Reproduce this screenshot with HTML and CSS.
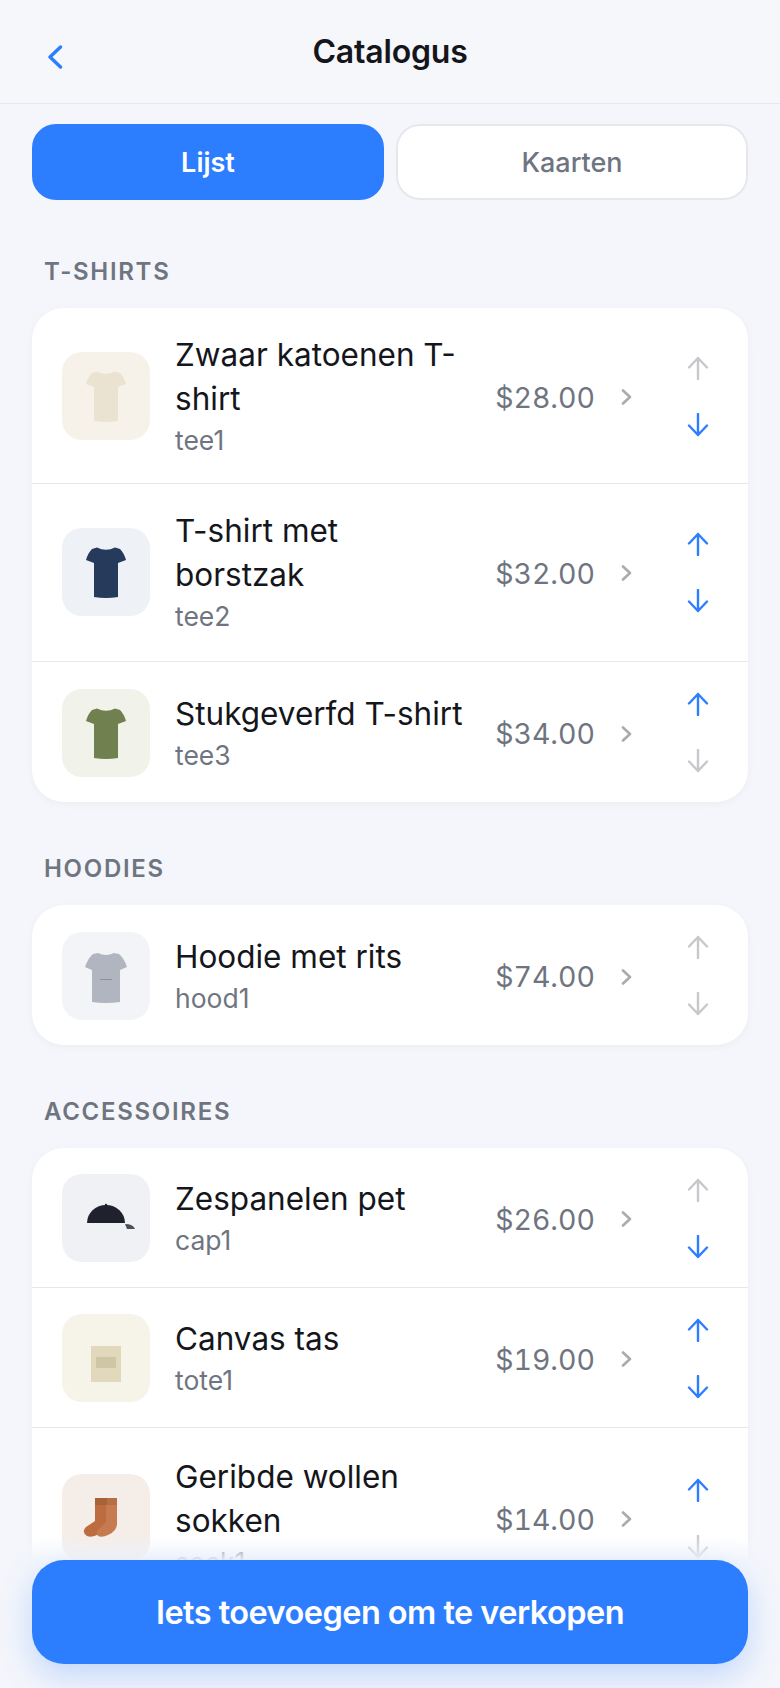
FILE: index.html
```html
<!DOCTYPE html>
<html lang="nl">
  <head>
    <meta charset="UTF-8" />
    <meta name="viewport" content="width=device-width, initial-scale=1.0" />
    <title>Catalogus</title>
    <link rel="stylesheet" href="styles.css">
  </head>
  <body>
    <svg class="defs" width="0" height="0">
      <symbol id="tee" viewBox="0 0 88 88">
        <path d="M35 19.500 Q44 24 53 19.500 L58 21 Q62 25 64 32 L56 35 L56 69 Q44 71 32 69 L32 35 L24 32 Q26 25 30 21 Z" fill="currentColor" />
      </symbol>
      <symbol id="up" viewBox="0 0 24 24">
        <path d="M12 2 V23 M3 11.5 L12 2 L21 11.5" fill="none" stroke="currentColor" stroke-width="2.4" stroke-linecap="round" stroke-linejoin="round" />
      </symbol>
      <symbol id="down" viewBox="0 0 24 24">
        <path d="M12 22 V1 M3 12.5 L12 22 L21 12.5" fill="none" stroke="currentColor" stroke-width="2.4" stroke-linecap="round" stroke-linejoin="round" />
      </symbol>
      <symbol id="chev" viewBox="0 0 12 16">
        <path d="M2 1.5 L9 8 L2 14.5" fill="none" stroke="currentColor" stroke-width="2.6" stroke-linecap="round" stroke-linejoin="round" />
      </symbol>
    </svg>

    <div class="screen">
      <header class="topbar">
        <button class="back" aria-label="Terug">
          <svg width="16" height="24" viewBox="0 0 16 24"><path d="M13.5 2 L3 12 L13.5 22" fill="none" stroke="currentColor" stroke-width="3.4" stroke-linecap="round" stroke-linejoin="round" /></svg>
        </button>
        <h1>Catalogus</h1>
      </header>

      <div class="tabs">
        <button class="tab active">Lijst</button>
        <button class="tab">Kaarten</button>
      </div>

      <section class="group">
        <h2>T-SHIRTS</h2>
        <div class="card">
          <div class="row">
            <div class="thumb bg-cream"><svg class="tee-cream"><use href="#tee" /></svg></div>
            <div class="info">
              <div class="name">Zwaar katoenen T-shirt</div>
              <div class="sku">tee1</div>
            </div>
            <div class="price">$28.00</div>
            <svg class="chev"><use href="#chev" /></svg>
            <div class="moves">
              <svg class="off"><use href="#up" /></svg>
              <svg><use href="#down" /></svg>
            </div>
          </div>
          <div class="row tall">
            <div class="thumb bg-blue"><svg class="tee-navy"><use href="#tee" /></svg></div>
            <div class="info">
              <div class="name">T-shirt met borstzak</div>
              <div class="sku">tee2</div>
            </div>
            <div class="price">$32.00</div>
            <svg class="chev"><use href="#chev" /></svg>
            <div class="moves">
              <svg><use href="#up" /></svg>
              <svg><use href="#down" /></svg>
            </div>
          </div>
          <div class="row">
            <div class="thumb bg-sage"><svg class="tee-olive"><use href="#tee" /></svg></div>
            <div class="info">
              <div class="name">Stukgeverfd T-shirt</div>
              <div class="sku">tee3</div>
            </div>
            <div class="price">$34.00</div>
            <svg class="chev"><use href="#chev" /></svg>
            <div class="moves">
              <svg><use href="#up" /></svg>
              <svg class="off"><use href="#down" /></svg>
            </div>
          </div>
        </div>
      </section>

      <section class="group">
        <h2>HOODIES</h2>
        <div class="card">
          <div class="row">
            <div class="thumb bg-grey">
              <svg viewBox="0 0 88 88">
                <path d="M36 21 Q44 25 52 21 L57 22 Q62 26 65 35 L58 38 L58 70 Q44 72 30 70 L30 38 L23 35 Q26 26 31 22 Z" fill="#b1b5bf" />
                <path d="M38 47.500 H50" stroke="#8c909a" stroke-width="1" />
              </svg>
            </div>
            <div class="info">
              <div class="name">Hoodie met rits</div>
              <div class="sku">hood1</div>
            </div>
            <div class="price">$74.00</div>
            <svg class="chev"><use href="#chev" /></svg>
            <div class="moves">
              <svg class="off"><use href="#up" /></svg>
              <svg class="off"><use href="#down" /></svg>
            </div>
          </div>
        </div>
      </section>

      <section class="group">
        <h2>ACCESSOIRES</h2>
        <div class="card">
          <div class="row">
            <div class="thumb bg-mist">
              <svg viewBox="0 0 88 88">
                <path d="M25 49 A19 18 0 0 1 63 49 Z" fill="#1f222c" />
                <circle cx="44" cy="31" r="1.200" fill="#1f222c" />
                <path d="M63 50 Q71 50 73 55 L65 55 Z" fill="#4d4f57" />
              </svg>
            </div>
            <div class="info">
              <div class="name">Zespanelen pet</div>
              <div class="sku">cap1</div>
            </div>
            <div class="price">$26.00</div>
            <svg class="chev"><use href="#chev" /></svg>
            <div class="moves">
              <svg class="off"><use href="#up" /></svg>
              <svg><use href="#down" /></svg>
            </div>
          </div>
          <div class="row">
            <div class="thumb bg-sand">
              <svg viewBox="0 0 88 88">
                <rect x="29" y="32" width="30" height="36" fill="#e2d9bd" />
                <rect x="34" y="43" width="20" height="11" fill="#cfc6a6" />
              </svg>
            </div>
            <div class="info">
              <div class="name">Canvas tas</div>
              <div class="sku">tote1</div>
            </div>
            <div class="price">$19.00</div>
            <svg class="chev"><use href="#chev" /></svg>
            <div class="moves">
              <svg><use href="#up" /></svg>
              <svg><use href="#down" /></svg>
            </div>
          </div>
          <div class="row tall socks">
            <div class="thumb bg-peach">
              <svg viewBox="0 0 88 88">
                <path d="M33 30 H45 V50 Q45 56 37 60 Q30 64 25 62 Q19 58 24 53 L33 47 Z" fill="#bd6c40" />
                <path d="M44 30 H55 V50 Q55 57 46 61 Q40 64 36 62 Q33 58 38 54 L44 48 Z" fill="#c67a4f" />
                <rect x="33" y="24" width="12" height="7" fill="#a8623a" />
                <rect x="45" y="24" width="10" height="7" fill="#b56e45" />
              </svg>
            </div>
            <div class="info">
              <div class="name">Geribde wollen sokken</div>
              <div class="sku">sock1</div>
            </div>
            <div class="price">$14.00</div>
            <svg class="chev"><use href="#chev" /></svg>
            <div class="moves">
              <svg><use href="#up" /></svg>
              <svg class="off"><use href="#down" /></svg>
            </div>
          </div>
        </div>
      </section>

      <div class="footer">
        <button class="add">Iets toevoegen om te verkopen</button>
      </div>
    </div>
  </body>
</html>
```

FILE: styles.css
```css
* {
  box-sizing: border-box;
}

html,
body {
  margin: 0;
  padding: 0;
  height: 100%;
}

body {
  font-family: Inter, "Liberation Sans", sans-serif;
  background-color: #f4f6fb;
  color: #14161c;
}

button {
  font-family: inherit;
  border: none;
  cursor: pointer;
}

.defs {
  position: absolute;
}

.screen {
  position: relative;
  height: 100vh;
  overflow: hidden;
}

/* top bar */
.topbar {
  position: relative;
  display: flex;
  align-items: center;
  justify-content: center;
  height: 104px;
  border-bottom: 1px solid #e6e8ee;
  background-color: #f6f7fb;
}

.topbar h1 {
  margin: 0;
  font-size: 32px;
  font-weight: 600;
  letter-spacing: -0.2px;
  color: #14161c;
}

.back {
  position: absolute;
  left: 47px;
  top: 45px;
  padding: 0;
  display: flex;
  background: none;
  color: #2d7dff;
}

/* list / cards switch */
.tabs {
  display: flex;
  gap: 12px;
  margin: 20px 32px 5px;
}

.tab {
  flex: 1;
  height: 76px;
  border: 2px solid #e6e8ee;
  border-radius: 24px;
  background-color: #fff;
  color: #6f7580;
  font-size: 27px;
  font-weight: 500;
}

.tab.active {
  border-color: #2d7dff;
  background-color: #2d7dff;
  color: #fff;
  font-weight: 600;
}

/* groups */
.group {
  padding: 52px 32px 0;
}

.group h2 {
  margin: 0 0 21px 12px;
  font-size: 24px;
  line-height: 30px;
  font-weight: 600;
  letter-spacing: 1.7px;
  color: #6f7580;
}

.card {
  background-color: #fff;
  border-radius: 32px;
  box-shadow: 0 2px 8px rgba(20, 30, 60, 0.04);
}

.row {
  display: flex;
  align-items: center;
  min-height: 140px;
  padding: 25px 0 24px 30px;
  border-bottom: 1px solid #e6e8ee;
}

.row:last-child {
  border-bottom: none;
}

.row.tall {
  padding-bottom: 26px;
}

.row.socks {
  padding-top: 27px;
}

.thumb {
  flex: none;
  width: 88px;
  height: 88px;
  border-radius: 20px;
  margin-right: 25px;
}

.thumb svg {
  display: block;
  width: 88px;
  height: 88px;
}

.bg-cream { background-color: #f6f2ea; }
.bg-blue { background-color: #eef1f6; }
.bg-sage { background-color: #f1f2ea; }
.bg-grey { background-color: #f3f4f7; }
.bg-mist { background-color: #f0f1f5; }
.bg-sand { background-color: #f6f3e9; }
.bg-peach { background-color: #f5eee8; }

.tee-cream { color: #ebe3d2; }
.tee-navy { color: #263a5c; }
.tee-olive { color: #71804f; }

.info {
  flex: 1;
  min-width: 0;
  margin-bottom: 2px;
}

.name {
  font-size: 31.5px;
  line-height: 44px;
  color: #14161c;
}

.sku {
  margin-top: 2px;
  font-size: 26.5px;
  line-height: 34px;
  color: #6f7580;
}

.price {
  flex: none;
  margin: 2px 0 0 26px;
  font-size: 28.5px;
  font-variant-numeric: tabular-nums;
  color: #6f7580;
}

.chev {
  flex: none;
  width: 12px;
  height: 16px;
  margin: 2px 53px 0 26px;
  color: #a9abb0;
}

.moves {
  flex: none;
  display: flex;
  flex-direction: column;
  gap: 33px;
  width: 24px;
  margin-right: 38px;
  color: #2d7dff;
}

.moves svg {
  display: block;
  width: 24px;
  height: 24px;
}

.moves .off {
  color: #c6c8cc;
}

/* sticky action */
.footer {
  position: absolute;
  left: 0;
  right: 0;
  bottom: 0;
  padding: 24px 32px 24px;
  background: linear-gradient(to bottom, rgba(244, 246, 251, 0), #f4f6fb 26px);
}

.add {
  display: block;
  width: 100%;
  height: 104px;
  border-radius: 32px;
  background-color: #2d7dff;
  color: #fff;
  font-size: 32.5px;
  font-weight: 600;
  letter-spacing: -0.55px;
  box-shadow: 0 12px 32px rgba(45, 125, 255, 0.25);
}
```
